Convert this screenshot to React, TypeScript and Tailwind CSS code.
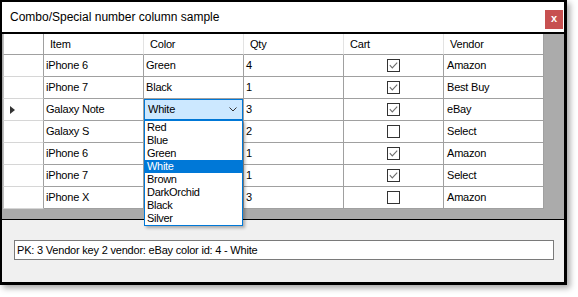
import React from "react";

type Row = { item: string; color: string; qty: string; cart: boolean; vendor: string; editing?: boolean };

const rows: Row[] = [
  { item: "iPhone 6", color: "Green", qty: "4", cart: true, vendor: "Amazon" },
  { item: "iPhone 7", color: "Black", qty: "1", cart: true, vendor: "Best Buy" },
  { item: "Galaxy Note", color: "White", qty: "3", cart: true, vendor: "eBay", editing: true },
  { item: "Galaxy S", color: "", qty: "2", cart: false, vendor: "Select" },
  { item: "iPhone 6", color: "", qty: "1", cart: true, vendor: "Amazon" },
  { item: "iPhone 7", color: "", qty: "1", cart: true, vendor: "Select" },
  { item: "iPhone X", color: "", qty: "3", cart: false, vendor: "Amazon" },
];

const colors = ["Red", "Blue", "Green", "White", "Brown", "DarkOrchid", "Black", "Silver"];

function Check({ checked }: { checked: boolean }) {
  return (
    <svg width="13" height="13" viewBox="0 0 13 13">
      <rect x="0.5" y="0.5" width="12" height="12" fill="white" stroke="#333333" />
      {checked && <path d="M2.8 6.2 L5.3 8.9 L10.2 3.6" stroke="#6e6e6e" strokeWidth="1.1" fill="none" />}
    </svg>
  );
}

const cell = "w-[100px] shrink-0 border-r border-b border-[#a0a0a0] flex items-center pl-[2px] whitespace-nowrap";

export default function App() {
  return (
    <div className="w-[578px] h-[297px] bg-white font-['Liberation_Sans',Arial,sans-serif] text-black">
      <div className="flex flex-col w-[567px] h-[285px] border-t-2 border-l-2 border-r-[3px] border-b-[3px] border-black shadow-[3px_3px_6px_rgba(0,0,0,0.35)]">
        {/* title bar */}
        <div className="h-[30px] flex items-start justify-between bg-white shrink-0">
          <span className="pl-[8px] text-[12px] leading-[30px]">Combo/Special number column sample</span>
          <div className="mt-[8px] mr-[1px] w-[18px] h-[19px] bg-[#c75050] flex items-center justify-center text-white text-[11px] font-bold leading-none pb-[2px]">
            x
          </div>
        </div>
        <div className="h-[2px] bg-black shrink-0" />
        {/* grid */}
        <div className="h-[186px] shrink-0 bg-[#ababab] pl-[1px] border-b border-black text-[11px] tracking-[-0.2px]">
          <div className="flex h-[21px] bg-white w-[541px]">
            <div className="w-[41px] shrink-0 border-l border-r border-b border-l-[#c0c0c0] border-r-[#a0a0a0] border-b-[#a0a0a0]" />
            {["Item", "Color", "Qty", "Cart", "Vendor"].map((h, i) => (
              <div
                key={h}
                className={`w-[100px] shrink-0 border-b border-[#a0a0a0] flex items-center pl-[6px] ${i < 4 ? "border-r border-r-[#e3e3e3]" : "border-r border-r-[#a0a0a0]"}`}
              >
                {h}
              </div>
            ))}
          </div>
          {rows.map((r, i) => (
            <div key={i} className="flex h-[22px] bg-white w-[541px]">
              <div className="w-[41px] shrink-0 border-l border-l-[#c0c0c0] border-r border-r-[#a0a0a0] border-b border-b-[#d6d6d6] flex items-center pl-[6px]">
                {r.editing && (
                  <svg width="5" height="8" viewBox="0 0 5 8">
                    <polygon points="0,0 5,4 0,8" fill="#333333" />
                  </svg>
                )}
              </div>
              <div className={cell}>{r.item}</div>
              {r.editing ? (
                <div className="w-[100px] shrink-0 border-r border-b border-[#a0a0a0] relative">
                  <div className="w-full h-full border border-[#0078d7] bg-[#cce8ff] flex items-center justify-between pl-[3px] pr-[5px]">
                    <span>White</span>
                    <svg width="8" height="5" viewBox="0 0 8 5">
                      <path d="M0.5 0.5 L4 4 L7.5 0.5" stroke="#333333" fill="none" />
                    </svg>
                  </div>
                  <div className="absolute top-[21px] left-0 w-[99px] z-10 bg-white border border-[#0078d7] shadow-[2px_2px_3px_rgba(0,0,0,0.3)] tracking-[-0.3px]">
                    {colors.map((c) => (
                      <div
                        key={c}
                        className={`h-[13px] leading-[13px] pl-[2px] ${c === "White" ? "bg-[#0078d7] text-white" : ""}`}
                      >
                        {c}
                      </div>
                    ))}
                  </div>
                </div>
              ) : (
                <div className={cell}>{r.color}</div>
              )}
              <div className={cell}>{r.qty}</div>
              <div className="w-[100px] shrink-0 border-r border-b border-[#a0a0a0] flex items-center justify-center pr-[1px]">
                <Check checked={r.cart} />
              </div>
              <div className={`${cell} pl-[3px]`}>{r.vendor}</div>
            </div>
          ))}
        </div>
        {/* bottom panel */}
        <div className="flex-1 bg-[#f0f0f0] pt-[20px]">
          <div className="ml-[12px] w-[540px] h-[20px] border border-[#7a7a7a] bg-white text-[11px] tracking-[-0.2px] leading-[18px] pl-[2px] whitespace-nowrap">
            PK: 3 Vendor key 2 vendor: eBay color id: 4 - White
          </div>
        </div>
      </div>
    </div>
  );
}
